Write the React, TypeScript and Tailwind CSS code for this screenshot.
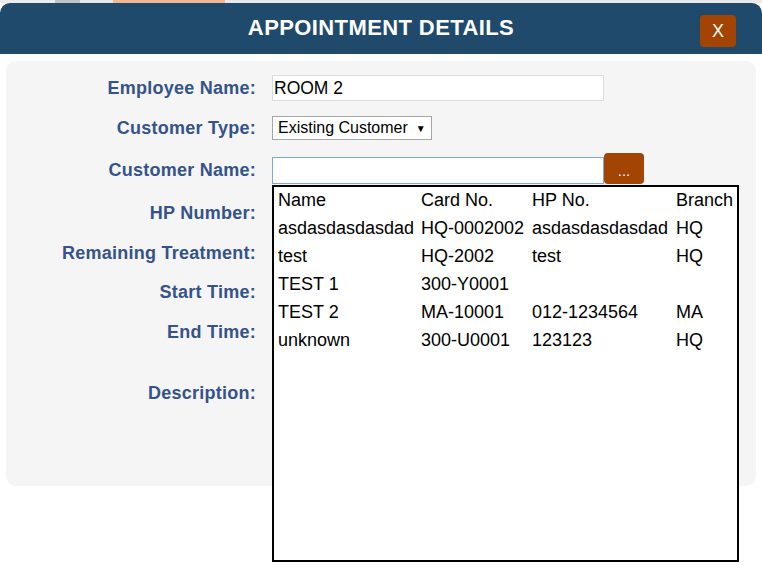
import React from 'react';

type Customer = {
  name: string;
  card: string;
  hp: string;
  branch: string;
};

const customers: Customer[] = [
  { name: 'asdasdasdasdad', card: 'HQ-0002002', hp: 'asdasdasdasdad', branch: 'HQ' },
  { name: 'test', card: 'HQ-2002', hp: 'test', branch: 'HQ' },
  { name: 'TEST 1', card: '300-Y0001', hp: '', branch: '' },
  { name: 'TEST 2', card: 'MA-10001', hp: '012-1234564', branch: 'MA' },
  { name: 'unknown', card: '300-U0001', hp: '123123', branch: 'HQ' },
];

const Label: React.FC<{ text: string }> = ({ text }) => (
  <div className="w-[250px] shrink-0 text-right text-[18px] tracking-[0.25px] font-bold text-[#34538a]">{text}</div>
);

const App: React.FC = () => {
  return (
    <div className="w-[762px] h-[576px] bg-white overflow-hidden relative font-['Liberation_Sans',Arial,sans-serif]">
      {/* strip of the page behind the modal */}
      <div className="h-[3px] flex">
        <div className="w-[55px] bg-[#ececec]" />
        <div className="w-[25px] bg-[#c4c4c4]" />
        <div className="w-[33px] bg-[#e8e8e8]" />
        <div className="w-[112px] bg-[#f3b893]" />
        <div className="flex-1 bg-[#e9e9e9]" />
      </div>

      <div className="h-[51px] bg-[#1f4a6c] rounded-t-[10px] flex items-center justify-center relative">
        <h1 className="text-white font-bold text-[22px] tracking-[0.4px] -mt-[2px]">APPOINTMENT DETAILS</h1>
        <button className="absolute right-[26px] top-[12px] w-[36px] h-[32px] rounded-[4px] bg-[#a34403] text-white text-[18px] font-['Liberation_Sans_Narrow',Arial,sans-serif] flex items-center justify-center">
          X
        </button>
      </div>

      <div className="mt-[7px] mx-[6px] h-[425px] bg-[#f5f5f5] rounded-[10px] pt-[7px]">
        <div className="flex flex-col">
          <div className="h-[40px] flex items-center gap-[16px]">
            <Label text="Employee Name:" />
            <input
              readOnly
              value="ROOM 2"
              className="w-[332px] h-[26px] bg-white border border-[#dcdcdc] px-[1px] text-[17.5px] text-black outline-none"
            />
          </div>
          <div className="h-[40px] flex items-center gap-[16px]">
            <Label text="Customer Type:" />
            <div className="w-[160px] h-[24px] bg-white border border-[#a6a6a6] flex items-center pl-[5px] gap-[8px] text-[16px] text-black">
              <span>Existing Customer</span>
              <span className="text-[10px]">▼</span>
            </div>
          </div>
          <div className="h-[44px] flex items-center gap-[16px]">
            <Label text="Customer Name:" />
            <div className="flex items-center">
              <input
                readOnly
                className="w-[332px] h-[27px] bg-white border border-[#7aa7e8] outline-none"
              />
              <button className="w-[40px] h-[31px] -mt-[4px] rounded-[4px] bg-[#a34403] text-white text-[15px] leading-none pt-[4px]">
                ...
              </button>
            </div>
          </div>
          <div className="h-[42px] flex items-center gap-[16px]">
            <Label text="HP Number:" />
          </div>
          <div className="h-[38px] flex items-center gap-[16px]">
            <Label text="Remaining Treatment:" />
          </div>
          <div className="h-[40px] flex items-center gap-[16px]">
            <Label text="Start Time:" />
          </div>
          <div className="h-[40px] flex items-center gap-[16px]">
            <Label text="End Time:" />
          </div>
          <div className="h-[82px] flex items-center gap-[16px]">
            <Label text="Description:" />
          </div>
        </div>
      </div>

      {/* customer lookup dropdown */}
      <div className="absolute left-[272px] top-[185px] w-[467px] h-[377px] bg-white border-2 border-black text-[18px] text-black">
        <div className="grid grid-cols-[143px_111px_144px_1fr] pl-[4px] -mt-[1px] auto-rows-[28px] items-center">
          <div>Name</div>
          <div>Card No.</div>
          <div>HP No.</div>
          <div>Branch</div>
          {customers.map((c) => (
            <React.Fragment key={c.card}>
              <div>{c.name}</div>
              <div>{c.card}</div>
              <div>{c.hp}</div>
              <div>{c.branch}</div>
            </React.Fragment>
          ))}
        </div>
      </div>
    </div>
  );
};

export default App;
